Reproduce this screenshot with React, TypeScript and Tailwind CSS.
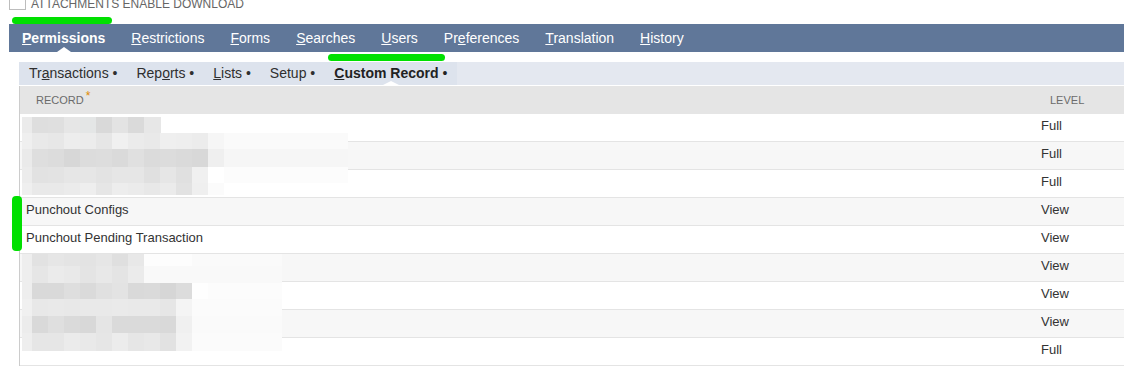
import React from 'react';

type Cell = [number, string];
type Band = { top: number; h: number; cells: Cell[] };

const g = (colors: string[]): Cell[] => colors.map((c) => [16, c] as Cell);

// pixelated redaction blocks over the record names
const mosaicA: Band[] = [
  { top: 117, h: 16, cells: [[10, '#ebebeb'], ...g(['#dedede', '#dfdfdf', '#e6e6e6', '#e4e6e6', '#d9d9d9', '#e3e3e3', '#dadada']), [17, '#e7e7e7']] },
  { top: 133, h: 16, cells: [[10, '#efefef'], ...g(['#e9e9e9', '#e7e7e7', '#ededed', '#ececec', '#e6e6e6', '#f0f0f0', '#ebebeb', '#e9e9e9', '#efefef', '#eeeeee', '#ececec', '#f6f6f6']), [124, '#fafafa']] },
  { top: 149, h: 18, cells: [[10, '#eaeaea'], ...g(['#dedede', '#dcdcdc', '#d7d7d7', '#dcdcdc', '#dddddd', '#dadada', '#e0e0e0', '#dbdbdb', '#dcdcdc', '#dadada', '#d8d8d8', '#efefef']), [124, '#f6f6f6']] },
  { top: 167, h: 16, cells: [[10, '#ececec'], ...g(['#e2e2e2', '#e3e3e3', '#e6e6e6', '#e6e6e6', '#e3e3e3', '#e6e6e6', '#e6e6e6', '#e0e0e0', '#e6e6e6', '#e0e0e0', '#f0f0f0', '#ffffff']), [124, '#fcfcfc']] },
  { top: 183, h: 12, cells: [[10, '#efefef'], ...g(['#e9e9e9', '#e9e9e9', '#ebebeb', '#eeeeee', '#e6e6e6', '#ededed', '#ebebeb', '#e8e8e8', '#ebebeb', '#e2e2e2', '#efefef', '#fbfbfb'])] },
];

const mosaicB: Band[] = [
  { top: 254, h: 12, cells: [[10, '#eeeeee'], ...g(['#e2e2e2', '#e6e6e6', '#e4e4e4', '#e3e3e3', '#e6e6e6', '#dfdfdf', '#e8e8e8']), [48, '#fdfdfd'], [90, '#fafafa']] },
  { top: 266, h: 17, cells: [[10, '#eeeeee'], ...g(['#e6e6e6', '#ebebeb', '#e9e9e9', '#e4e4e4', '#e8e8e8', '#e4e4e4', '#ebebeb']), [138, '#f9f9f9']] },
  { top: 283, h: 16, cells: [[10, '#eeeeee'], ...g(['#d9d9d9', '#d9d9d9', '#dedede', '#dadada', '#e0e0e0', '#e3e3e3', '#d9d9d9', '#dadada', '#d6d6d6', '#dcdcdc', '#fefefe']), [74, '#fcfcfc']] },
  { top: 299, h: 17, cells: [[10, '#f0f0f0'], ...g(['#e8e8e8', '#e9e9e9', '#e8e8e8', '#e9e9e9', '#e9e9e9', '#eaeaea', '#e9e9e9', '#e9e9e9', '#e6e6e6', '#f4f4f4']), [90, '#fbfbfb']] },
  { top: 316, h: 17, cells: [[10, '#ececec'], ...g(['#d9d9d9', '#dfdfdf', '#dadada', '#d8d8d8', '#e5e5e5', '#dadada', '#dadada', '#dadada', '#d9d9d9', '#f0f0f0']), [90, '#fafafa']] },
  { top: 333, h: 18, cells: [[10, '#eeeeee'], ...g(['#e6e6e6', '#e6e6e6', '#ebebeb', '#e9e9e9', '#e6e6e6', '#ececec', '#e6e6e6', '#e8e8e8', '#e2e2e2', '#f2f2f2']), [90, '#fbfbfb']] },
];

const records = [
  { name: '', level: 'Full' },
  { name: '', level: 'Full' },
  { name: '', level: 'Full' },
  { name: 'Punchout Configs', level: 'View' },
  { name: 'Punchout Pending Transaction', level: 'View' },
  { name: '', level: 'View' },
  { name: '', level: 'View' },
  { name: '', level: 'View' },
  { name: '', level: 'Full' },
];

function Mosaic({ bands }: { bands: Band[] }) {
  return (
    <>
      {bands.map((b) => (
        <div key={b.top} className="absolute left-[22px] flex" style={{ top: b.top, height: b.h }}>
          {b.cells.map(([w, c], i) => (
            <div key={i} className="h-full" style={{ width: w, background: c }} />
          ))}
        </div>
      ))}
    </>
  );
}

export default function App() {
  return (
    <div className="relative w-[1124px] h-[366px] overflow-hidden bg-white font-['Liberation_Sans',Arial,sans-serif]">
      <div className="h-[24px] pl-[9px] flex items-start overflow-hidden">
        <div className="flex items-start -mt-[7px]">
          <span className="w-[17px] h-[17px] border border-[#bdbdbd] bg-white" />
          <span className="ml-[5px] mt-[4px] text-[12px] leading-[15px] text-[#666]">ATTACHMENTS ENABLE DOWNLOAD</span>
        </div>
      </div>

      <div className="ml-[9px] h-[28px] bg-[#607799] flex pl-[13px] gap-[26px] text-[14px] text-white">
        <div className="relative flex items-center font-bold">
          <span><u>P</u>ermissions</span>
          <span className="absolute bottom-0 left-1/2 -translate-x-1/2 w-0 h-0 border-l-[7px] border-r-[7px] border-b-[5px] border-l-transparent border-r-transparent border-b-white" />
        </div>
        <div className="flex items-center"><span><u>R</u>estrictions</span></div>
        <div className="flex items-center"><span><u>F</u>orms</span></div>
        <div className="flex items-center"><span><u>S</u>earches</span></div>
        <div className="flex items-center"><span><u>U</u>sers</span></div>
        <div className="flex items-center"><span>Pr<u>e</u>ferences</span></div>
        <div className="flex items-center"><span><u>T</u>ranslation</span></div>
        <div className="flex items-center"><span><u>H</u>istory</span></div>
      </div>

      <div className="mt-[10px] ml-[19px] h-[23px] bg-[#e4e8f0] flex">
        <div className="bg-[#dde3ed] flex pl-[10px] pr-[10px] gap-[19px] text-[14px] text-[#2f2f2f]">
          <div className="flex items-center">Tr<u>a</u>nsactions&nbsp;•</div>
          <div className="flex items-center">Rep<u>o</u>rts&nbsp;•</div>
          <div className="flex items-center"><u>L</u>ists&nbsp;•</div>
          <div className="flex items-center">Setup&nbsp;•</div>
          <div className="relative flex items-center font-bold text-[#222]">
            <span><u>C</u>ustom Record</span>
            <span className="font-normal">&nbsp;•</span>
            <span className="absolute bottom-0 left-1/2 -translate-x-1/2 w-0 h-0 border-l-[8px] border-r-[8px] border-b-[4px] border-l-transparent border-r-transparent border-b-white" />
          </div>
        </div>
      </div>

      <div className="mt-[1px] ml-[19px] border-l border-[#cccccc] h-[300px]">
        <div className="h-[28px] bg-[#e5e5e5] flex items-center text-[11px] text-[#6b6b6b]">
          <div className="flex-1 pl-[16px]">
            RECORD<span className="relative -top-[4px] ml-[2px] text-[12px] text-[#e08a00]">*</span>
          </div>
          <div className="w-[74px]">LEVEL</div>
        </div>
        {records.map((r, i) => (
          <div
            key={i}
            className={`h-[28px] flex border-b border-[#e4e4e4] text-[13px] leading-[15px] text-[#333] pt-[4px] ${i % 2 === 1 ? 'bg-[#f7f7f7]' : 'bg-white'}`}
          >
            <div className="flex-1 pl-[6px]">{r.name}</div>
            <div className="w-[83px]">{r.level}</div>
          </div>
        ))}
      </div>

      <Mosaic bands={mosaicA} />
      <Mosaic bands={mosaicB} />

      <div className="absolute left-[12px] top-[17px] w-[100px] h-[7px] rounded-[4px] bg-[#00e000]" />
      <div className="absolute left-[328px] top-[54px] w-[117px] h-[7px] rounded-[4px] bg-[#00e000]" />
      <div className="absolute left-[12px] top-[196px] w-[10px] h-[55px] rounded-[4px] bg-[#00e000]" />
    </div>
  );
}
